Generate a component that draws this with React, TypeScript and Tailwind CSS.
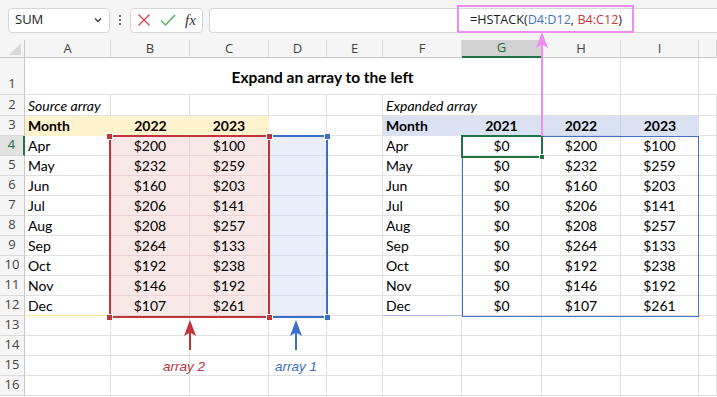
import React from 'react';

const COLS = ['A', 'B', 'C', 'D', 'E', 'F', 'G', 'H', 'I', 'J'];
const MONTHS = ['Apr', 'May', 'Jun', 'Jul', 'Aug', 'Sep', 'Oct', 'Nov', 'Dec'];
const V22 = [200, 232, 160, 206, 208, 264, 192, 146, 107];
const V23 = [100, 259, 203, 141, 257, 133, 238, 192, 261];

const cellFont = { fontFamily: 'Lato, "Noto Sans", sans-serif' };
const uiFont = { fontFamily: '"Open Sans", "Noto Sans", sans-serif' };

type Cell = { text?: string; cls?: string };

function getCell(row: number, col: string): Cell {
  const base = 'border-r border-b border-[#e1e1e1]';
  if (row === 2) {
    if (col === 'A') return { text: 'Source array', cls: `${base} italic` };
    if (col === 'F') return { text: 'Expanded array', cls: 'border-b border-[#e1e1e1] italic overflow-visible z-10' };
  }
  if (row === 3) {
    if (col === 'A') return { text: 'Month', cls: 'bg-[#fff2cc] font-bold border-b border-[#fff2cc]' };
    if (col === 'B') return { text: '2022', cls: 'bg-[#fff2cc] font-bold justify-center border-b border-[#fff2cc]' };
    if (col === 'C') return { text: '2023', cls: 'bg-[#fff2cc] font-bold justify-center border-b border-r border-[#fff2cc]' };
    if (col === 'F') return { text: 'Month', cls: 'bg-[#d9e1f2] font-bold border-b border-[#d9e1f2]' };
    if (col === 'G') return { text: '2021', cls: 'bg-[#d9e1f2] font-bold justify-center border-r border-b border-[#c9d3ea]' };
    if (col === 'H') return { text: '2022', cls: 'bg-[#d9e1f2] font-bold justify-center border-r border-b border-[#c9d3ea]' };
    if (col === 'I') return { text: '2023', cls: 'bg-[#d9e1f2] font-bold justify-center border-b border-[#d9e1f2]' };
  }
  if (row >= 4 && row <= 12) {
    const i = row - 4;
    const last = row === 12;
    if (col === 'A') return { text: MONTHS[i], cls: last ? 'border-r border-b border-r-[#e1e1e1] border-b-[#ffe699]' : base };
    if (col === 'B') return { text: `$${V22[i]}`, cls: 'bg-[#f8e7e7] justify-center border-r border-b border-[#ead2d2]' };
    if (col === 'C') return { text: `$${V23[i]}`, cls: 'bg-[#f8e7e7] justify-center border-r border-b border-[#ead2d2]' };
    if (col === 'D') return { cls: 'bg-[#eaeef8] border-r border-b border-[#d8deed]' };
    if (col === 'F') return { text: MONTHS[i], cls: last ? 'border-r border-b border-r-[#e1e1e1] border-b-[#a9bde3]' : base };
    if (col === 'G') return { text: '$0', cls: `${base} justify-center` };
    if (col === 'H') return { text: `$${V22[i]}`, cls: `${base} justify-center` };
    if (col === 'I') return { text: `$${V23[i]}`, cls: `${base} justify-center` };
  }
  return { cls: base };
}

const Arrow: React.FC<{ color: string; height: number }> = ({ color, height }) => (
  <svg width="14" height={height} viewBox={`0 0 14 ${height}`}>
    <line x1="7" y1="12" x2="7" y2={height} stroke={color} strokeWidth="2" />
    <path d="M7 0 L13 16 L7 12.5 L1 16 Z" fill={color} />
  </svg>
);

const App: React.FC = () => {
  const rows = Array.from({ length: 16 }, (_, i) => i + 1);

  return (
    <div className="relative w-[717px] h-[397px] overflow-hidden bg-white text-[14px] text-black" style={cellFont}>
      {/* Formula bar */}
      <div className="h-[40px] bg-[#f5f5f5] flex items-center gap-[9px] pl-[8px]" style={uiFont}>
        <div className="w-[102px] h-[25px] bg-white border border-[#d6d6d6] rounded-[4px] flex items-center justify-between px-[6px] text-[13px] text-[#222]">
          <span>SUM</span>
          <svg width="10" height="10" viewBox="0 0 10 10"><path d="M2 3.5 L5 6.5 L8 3.5" fill="none" stroke="#333" strokeWidth="1.3" /></svg>
        </div>
        <div className="flex flex-col gap-[2px]">
          <span className="w-[2px] h-[2px] bg-[#444] rounded-full" />
          <span className="w-[2px] h-[2px] bg-[#444] rounded-full" />
          <span className="w-[2px] h-[2px] bg-[#444] rounded-full" />
        </div>
        <div className="w-[73px] h-[25px] bg-white border border-[#d6d6d6] rounded-[4px] flex items-center gap-[9px] px-[6px]">
          <svg width="14" height="14" viewBox="0 0 14 14"><path d="M1.5 1.5 L12.5 12.5 M12.5 1.5 L1.5 12.5" stroke="#e2474d" strokeWidth="1.4" /></svg>
          <svg width="16" height="14" viewBox="0 0 16 14"><path d="M1 7.5 L5.5 12 L15 2" fill="none" stroke="#4cae5a" strokeWidth="1.4" /></svg>
          <span className="italic text-[15px] text-[#333] leading-none" style={{ fontFamily: '"Liberation Serif", serif' }}>fx</span>
        </div>
        <div className="flex-1 -ml-[3px] h-[25px] bg-white border border-r-0 border-[#d6d6d6] rounded-l-[4px] flex items-center pl-[260px] text-[12.6px] text-[#222]">
          <span>=HSTACK(<span className="text-[#3b74c9]">D4:D12</span>, <span className="text-[#c43a3a]">B4:C12</span>)</span>
        </div>
      </div>

      {/* Sheet grid */}
      <div className="grid grid-cols-[25px_86px_79px_79px_58px_56px_79px_80px_79px_78px_1fr] grid-rows-[18px_37px_21px_repeat(14,20px)]">
        <div className="bg-[#f5f5f5] border-r border-b border-[#c8c8c8] relative">
          <svg className="absolute right-[3px] bottom-[2px]" width="12" height="12" viewBox="0 0 12 12"><path d="M12 0 L12 12 L0 12 Z" fill="#d9d9d9" /></svg>
        </div>
        {COLS.map((c) => (
          <div
            key={c}
            className={`flex items-center justify-center text-[13px] border-b ${
              c === 'G'
                ? 'bg-[#d2d2d2] text-[#1e6b3e] border-b-2 border-[#217346] border-r border-r-[#c8c8c8]'
                : 'bg-[#f5f5f5] text-[#444] border-r border-[#dadada] border-b-[#c8c8c8]'
            }`}
            style={uiFont}
          >
            {c === 'J' ? '' : c}
          </div>
        ))}

        {rows.map((r) => (
          <React.Fragment key={r}>
            <div
              className={`flex items-end justify-center pb-[1px] text-[13px] border-b ${
                r === 4
                  ? 'bg-[#e1e1e1] text-[#2b6b47] border-r-2 border-r-[#217346] border-b-[#d6d6d6]'
                  : 'bg-[#f5f5f5] text-[#444] border-r border-r-[#c8c8c8] border-b-[#dadada]'
              }`}
              style={uiFont}
            >
              {r}
            </div>
            {r === 1 ? (
              <>
                <div className="col-span-8 flex items-end justify-center pb-[5px] font-bold text-[15.5px] border-r border-b border-[#e1e1e1]">
                  Expand an array to the left
                </div>
                <div className="border-r border-b border-[#e1e1e1]" />
                <div className="border-b border-[#e1e1e1]" />
              </>
            ) : (
              COLS.map((c) => {
                const cell = getCell(r, c);
                return (
                  <div key={c} className={`flex items-center px-[3px] whitespace-nowrap ${cell.cls ?? ''}`}>
                    {cell.text}
                  </div>
                );
              })
            )}
          </React.Fragment>
        ))}
      </div>

      {/* Right table outline (G4:I12) */}
      <div className="absolute left-[462px] top-[136px] w-[237px] h-[181px] border border-[#4472c4] pointer-events-none" />
      {/* Active cell G4 */}
      <div className="absolute left-[461px] top-[135px] w-[82px] h-[23px] border-2 border-[#217346]" />
      <div className="absolute left-[539px] top-[154px] w-[6px] h-[6px] bg-[#217346] border border-white" />

      {/* array 1 range D4:D12 */}
      <div className="absolute left-[269px] top-[135px] w-[59px] h-[183px] border-2 border-l-0 border-[#3a6fc8]" />
      <div className="absolute left-[324px] top-[133px] w-[7px] h-[7px] bg-[#3a6fc8] border border-white" />
      <div className="absolute left-[324px] top-[314px] w-[7px] h-[7px] bg-[#3a6fc8] border border-white" />

      {/* array 2 range B4:C12 */}
      <div className="absolute left-[109px] top-[135px] w-[161px] h-[183px] border-2 border-[#c0343c]" />
      <div className="absolute left-[106px] top-[133px] w-[7px] h-[7px] bg-[#c0343c] border border-white" />
      <div className="absolute left-[266px] top-[133px] w-[7px] h-[7px] bg-[#c0343c] border border-white" />
      <div className="absolute left-[106px] top-[314px] w-[7px] h-[7px] bg-[#c0343c] border border-white" />
      <div className="absolute left-[266px] top-[314px] w-[7px] h-[7px] bg-[#c0343c] border border-white" />

      {/* Callouts */}
      <div className="absolute left-[183px] top-[320px]"><Arrow color="#c0343c" height={30} /></div>
      <div className="absolute left-[289px] top-[320px]"><Arrow color="#3a6fc8" height={30} /></div>
      <span className="absolute left-[163px] top-[357px] italic text-[13.5px] text-[#c0343c]" style={{ fontFamily: '"Liberation Sans", sans-serif' }}>array 2</span>
      <span className="absolute left-[275px] top-[357px] italic text-[13.5px] text-[#3a6fc8]" style={{ fontFamily: '"Liberation Sans", sans-serif' }}>array 1</span>

      <div className="absolute left-[457px] top-[5px] w-[177px] h-[28px] border-2 border-[#f08cf0]" />
      <div className="absolute left-[535px] top-[32px]"><Arrow color="#f08cf0" height={104} /></div>
    </div>
  );
};

export default App;
